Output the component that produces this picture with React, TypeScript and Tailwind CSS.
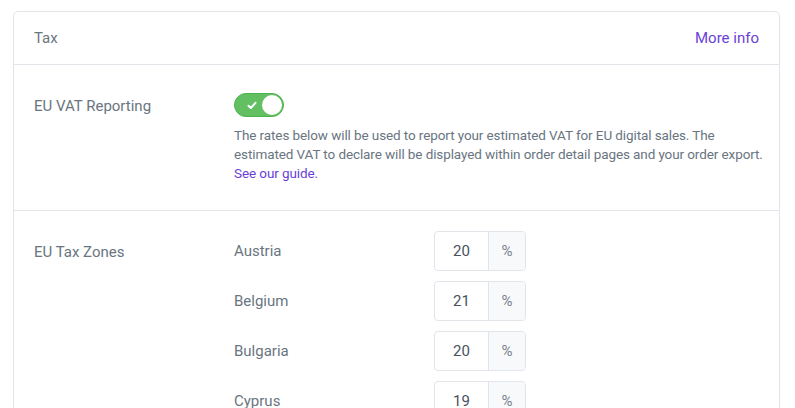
import React from 'react'

const zones = [
  { name: 'Austria', rate: '20' },
  { name: 'Belgium', rate: '21' },
  { name: 'Bulgaria', rate: '20' },
  { name: 'Cyprus', rate: '19' },
  { name: 'Czech Republic', rate: '21' },
  { name: 'Denmark', rate: '25' },
]

export default function App() {
  return (
    <div className="min-h-screen bg-white pl-[13px] pt-[11px] text-[#69757f]" style={{ fontFamily: 'Roboto, "Noto Sans", sans-serif' }}>
      <div className="w-[767px] rounded-[5px] border border-[#e1e5ea] bg-white">
        <div className="flex h-[53px] items-center justify-between border-b border-[#e1e5ea] px-[20px] text-[15px]">
          <span>Tax</span>
          <a className="text-[#6a3fd8]">More info</a>
        </div>

        <div className="flex border-b border-[#e1e5ea] px-[20px] pb-[27px] pt-[28px]">
          <div className="w-[200px] shrink-0 pt-[2px] text-[15px]">EU VAT Reporting</div>
          <div className="min-w-0 flex-1">
            <div className="relative h-[24px] w-[50px] rounded-full border border-[#4db44d] bg-[#62c062]">
              <svg className="absolute left-[12px] top-[7px]" width="10" height="9" viewBox="0 0 10 9">
                <path d="M1.5 4.8 L3.8 7 L8.5 1.8" fill="none" stroke="white" strokeWidth="2" strokeLinecap="round" strokeLinejoin="round" />
              </svg>
              <div className="absolute right-[1px] top-[1px] h-[20px] w-[20px] rounded-full bg-white" />
            </div>
            <p className="mt-[9px] w-[530px] text-[13.5px] leading-[19px] tracking-[-0.1px]">
              The rates below will be used to report your estimated VAT for EU digital sales. The estimated VAT to declare will be displayed within order detail pages and your order export.{' '}
              <a className="text-[#6a3fd8]">See our guide.</a>
            </p>
          </div>
        </div>

        <div className="flex px-[20px] pt-[20px]">
          <div className="w-[200px] shrink-0 pt-[10px] text-[15px]">EU Tax Zones</div>
          <div className="flex flex-col gap-[10px]">
            {zones.map((z) => (
              <div key={z.name} className="flex items-center">
                <div className="w-[200px] shrink-0 text-[15px]">{z.name}</div>
                <div className="flex h-[40px] w-[92px] overflow-hidden rounded-[4px] border border-[#e1e5ea]">
                  <div className="flex w-[54px] items-center justify-center border-r border-[#e1e5ea] text-[15px] text-[#48525c]">{z.rate}</div>
                  <div className="flex flex-1 items-center justify-center bg-[#f8f9fb] text-[15px] text-[#78838d]">%</div>
                </div>
              </div>
            ))}
          </div>
        </div>
      </div>
    </div>
  )
}
